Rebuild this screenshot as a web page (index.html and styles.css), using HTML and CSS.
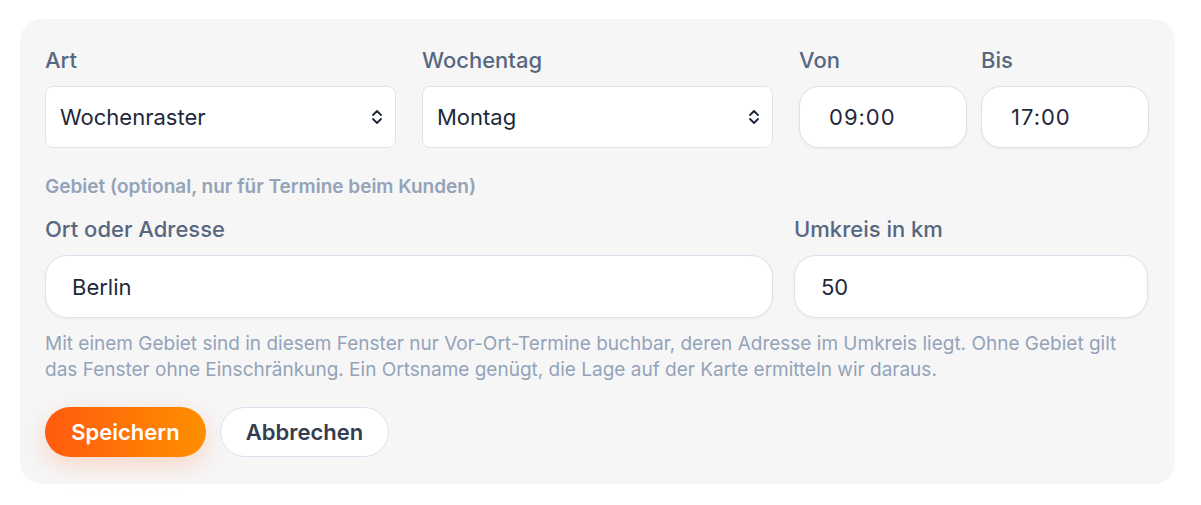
FILE: index.html
```html
<!DOCTYPE html>
<html lang="de">
<head>
<meta charset="utf-8">
<title>Fenster</title>
<link rel="stylesheet" href="styles.css">
</head>
<body>
<div class="page">
  <form class="card">
    <div class="row-top">
      <div class="field">
        <div class="label">Art</div>
        <div class="select">
          <span>Wochenraster</span>
          <svg class="chev" width="12" height="16" viewBox="0 0 12 16"><path d="M2 6 L6 2 L10 6 M2 10 L6 14 L10 10" fill="none" stroke="#1e293b" stroke-width="1.8" stroke-linecap="round" stroke-linejoin="round"/></svg>
        </div>
      </div>
      <div class="field">
        <div class="label">Wochentag</div>
        <div class="select">
          <span>Montag</span>
          <svg class="chev" width="12" height="16" viewBox="0 0 12 16"><path d="M2 6 L6 2 L10 6 M2 10 L6 14 L10 10" fill="none" stroke="#1e293b" stroke-width="1.8" stroke-linecap="round" stroke-linejoin="round"/></svg>
        </div>
      </div>
      <div class="times">
        <div class="field">
          <div class="label">Von</div>
          <div class="time">09:00</div>
        </div>
        <div class="field">
          <div class="label">Bis</div>
          <div class="time">17:00</div>
        </div>
      </div>
    </div>

    <div class="section-hint">Gebiet (optional, nur für Termine beim Kunden)</div>

    <div class="row-area">
      <div class="field">
        <div class="label">Ort oder Adresse</div>
        <div class="input">Berlin</div>
      </div>
      <div class="field">
        <div class="label">Umkreis in km</div>
        <div class="input">50</div>
      </div>
    </div>

    <p class="help">Mit einem Gebiet sind in diesem Fenster nur Vor-Ort-Termine buchbar, deren Adresse im Umkreis liegt. Ohne Gebiet gilt das Fenster ohne Einschränkung. Ein Ortsname genügt, die Lage auf der Karte ermitteln wir daraus.</p>

    <div class="actions">
      <button type="button" class="btn btn-primary">Speichern</button>
      <button type="button" class="btn btn-secondary">Abbrechen</button>
    </div>
  </form>
</div>
</body>
</html>
```

FILE: styles.css
```css
* { box-sizing: border-box; }

html, body {
  margin: 0;
  padding: 0;
  background: #ffffff;
}

body {
  font-family: Inter, "Noto Sans", "Liberation Sans", sans-serif;
  color: #1e293b;
}

.page {
  padding: 19px 26px 20px 20px;
}

.card {
  width: 1155px;
  background: #f6f6f7;
  border-radius: 22px;
  padding: 28px 27px 27px 25px;
}

.row-top {
  display: grid;
  grid-template-columns: 351px 351px 1fr;
  column-gap: 26px;
}

.times {
  display: grid;
  grid-template-columns: 168px 168px;
  column-gap: 14px;
}

.field {
  display: flex;
  flex-direction: column;
  min-width: 0;
}

.label {
  font-size: 22px;
  line-height: 26px;
  font-weight: 500;
  color: #586780;
  margin-bottom: 13px;
}

.select {
  height: 62px;
  background: #ffffff;
  border: 1px solid #dfe5ef;
  border-radius: 8px;
  display: flex;
  align-items: center;
  justify-content: space-between;
  padding: 0 12px 0 14px;
  font-size: 22px;
  color: #1e293b;
}

.chev { display: block; }

.time {
  height: 62px;
  background: #ffffff;
  border: 1px solid #dbe2ee;
  border-radius: 20px;
  display: flex;
  align-items: center;
  padding-left: 29px;
  font-size: 22px;
  letter-spacing: 1px;
  color: #1e293b;
  box-shadow: 0 1px 3px rgba(30, 41, 59, 0.05);
}

.section-hint {
  margin-top: 27px;
  font-size: 19px;
  line-height: 23px;
  font-weight: 600;
  color: #94a3b8;
}

.row-area {
  margin-top: 18px;
  display: grid;
  grid-template-columns: 728fr 354fr;
  column-gap: 21px;
}

.input {
  height: 63px;
  background: #ffffff;
  border: 1px solid #dbe2ee;
  border-radius: 22px;
  display: flex;
  align-items: center;
  padding-left: 26px;
  font-size: 22px;
  color: #1e293b;
  box-shadow: 0 1px 3px rgba(30, 41, 59, 0.05);
}

.help {
  margin: 13px 0 0 0;
  font-size: 19px;
  line-height: 25.5px;
  color: #94a3b8;
}

.actions {
  margin-top: 25px;
  display: flex;
  gap: 14px;
}

.btn {
  height: 50px;
  border-radius: 25px;
  font-family: inherit;
  font-size: 22px;
  font-weight: 600;
  padding: 0;
  cursor: pointer;
}

.btn-primary {
  border: none;
  color: #ffffff;
  background: linear-gradient(90deg, #ff5a0f 0%, #ff7a05 60%, #ff8f00 100%);
  box-shadow: 0 8px 24px rgba(255, 100, 20, 0.22);
  width: 161px;
}

.btn-secondary {
  background: #ffffff;
  border: 1px solid #d9e1ee;
  color: #333d4f;
  width: 169px;
}
```
